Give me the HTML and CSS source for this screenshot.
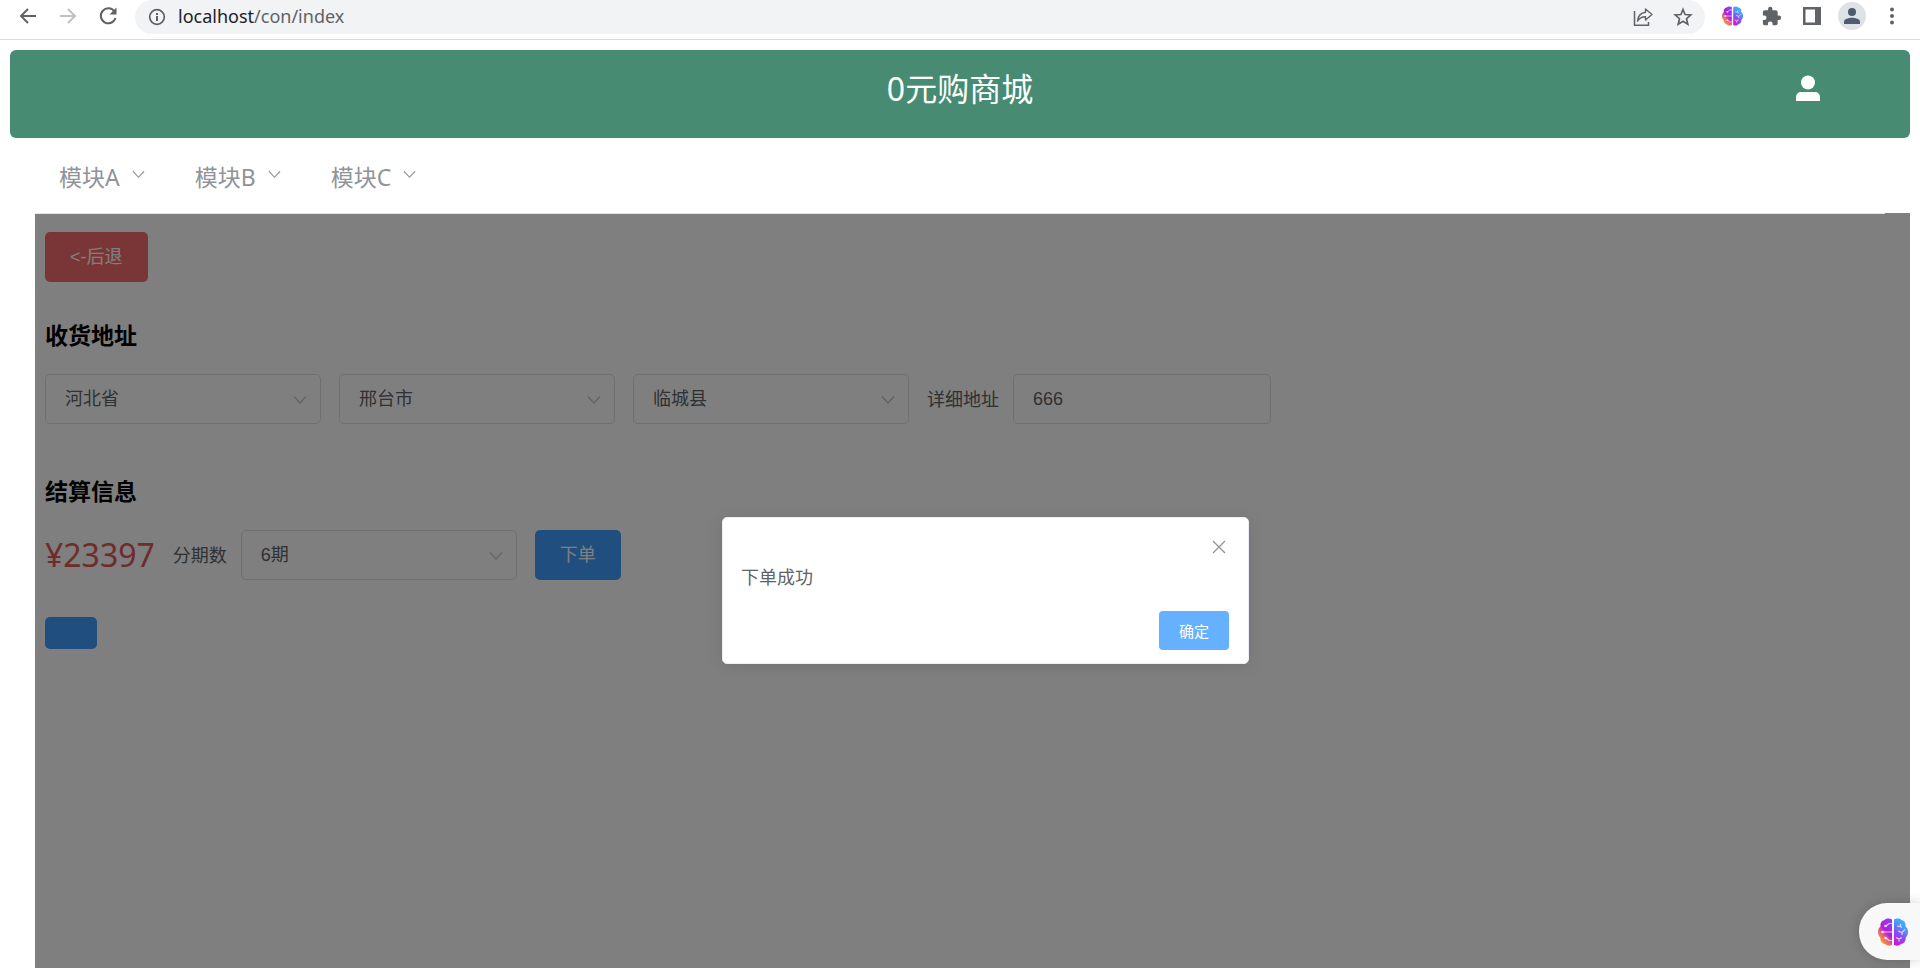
FILE: index.html
```html
<!DOCTYPE html>
<html lang="zh-CN">
<head>
<meta charset="utf-8">
<title>0元购商城</title>
<link rel="stylesheet" href="styles.css">
</head>
<body>
<svg class="defs" width="0" height="0" aria-hidden="true">
  <defs>
    <linearGradient id="brain-left" x1="0" y1="1" x2="0.6" y2="0">
      <stop offset="0.2" stop-color="#ff9a2e"/><stop offset="0.45" stop-color="#e8607c"/><stop offset="0.65" stop-color="#b31be0"/><stop offset="1" stop-color="#8f3cf0"/>
    </linearGradient>
    <linearGradient id="brain-right" x1="0.2" y1="1" x2="0.6" y2="0">
      <stop offset="0" stop-color="#d414d0"/><stop offset="0.4" stop-color="#8a4cf0"/><stop offset="0.8" stop-color="#3fa9ff"/>
    </linearGradient>
    <symbol id="brain" viewBox="0 0 30 28">
      <path fill="url(#brain-left)" d="M14 1.5C12 .2 8.500 0 6.500 2 3.500 2.500 2 5.500 2.500 8.500.5 10 0 12 0 14c0 2.500 1 4.500 2.300 5.500C2 23 4 25.500 7 26c2 2 5 2.200 7 .8z"/>
      <path fill="url(#brain-right)" d="M16 1.500C18 .2 21.500 0 23.500 2c3 .5 4.500 3.500 4 6.500C29.500 10 30 12 30 14c0 2.500-1 4.500-2.300 5.500C28 23 26 25.500 23 26c-2 2-5 2.200-7 .8z"/>
      <path fill="none" stroke="#fff" stroke-opacity=".7" stroke-width="1.200" d="M14 5.500h-3L8 8M4 14h10M14 22.500h-3L8 20M19 8l3 .5M23 6l-1 2.500 2 1M20 13l4 1.500 3-3M24 14.500v2.500M18 19.500l3 1.500 3-1.500M21 21v2.500"/>
      <circle cx="7.500" cy="8" r="1.300" fill="#fff" fill-opacity=".8"/><circle cx="4.500" cy="14" r="1.300" fill="#fff" fill-opacity=".8"/><circle cx="7.500" cy="20" r="1.300" fill="#fff" fill-opacity=".8"/>
    </symbol>
    <symbol id="chevron" viewBox="0 0 14 14"><path d="M1 3.500l6 6.500 6-6.500" fill="none" stroke="currentColor" stroke-width="1.200"/></symbol>
  </defs>
</svg>

<div class="browser-bar">
  <button class="tool" aria-label="返回"><svg width="20" height="20" viewBox="0 0 20 20"><path d="M18 10H3M10 3l-7 7 7 7" fill="none" stroke="#5f6368" stroke-width="2"/></svg></button>
  <button class="tool" aria-label="前进"><svg width="20" height="20" viewBox="0 0 20 20"><path d="M2 10h15M10 3l7 7-7 7" fill="none" stroke="#bfc1c4" stroke-width="2"/></svg></button>
  <button class="tool" aria-label="重新加载"><svg width="20" height="20" viewBox="0 0 20 20"><path d="M16.500 5.500A7.500 7.500 0 1 0 17.500 12" fill="none" stroke="#5f6368" stroke-width="2"/><path d="M18.500 1.500v7h-7z" fill="#5f6368"/></svg></button>
  <div class="omnibox">
    <svg width="18" height="18" viewBox="0 0 18 18"><circle cx="9" cy="9" r="7.300" fill="none" stroke="#5f6368" stroke-width="1.700"/><path d="M8 8h2v5H8zM8 5h2v2H8z" fill="#5f6368"/></svg>
    <span class="url"><span class="host">localhost</span>/con/index</span>
    <button class="mini" aria-label="分享"><svg width="20" height="20" viewBox="0 0 20 20"><path d="M1.500 4v14.300h14V15" fill="none" stroke="#5f6368" stroke-width="1.500"/><path d="M12.500 2l6.500 5.500-6.500 5.500V9.800C9 9.700 6.500 11 4.500 14 5 9.500 7.500 6 12.500 5.300z" fill="none" stroke="#5f6368" stroke-width="1.400" stroke-linejoin="round"/></svg></button>
    <button class="mini" aria-label="收藏"><svg width="20" height="20" viewBox="0 0 20 20"><path d="M10 2.500l2.100 5 5.700.5-4.300 3.700 1.300 5.600-4.800-3-4.800 3 1.300-5.600L2.200 8l5.700-.5z" fill="none" stroke="#5f6368" stroke-width="1.700"/></svg></button>
  </div>
  <button class="tool" aria-label="扩展程序"><svg width="21" height="20"><use href="#brain"/></svg></button>
  <button class="tool" aria-label="扩展"><svg width="20" height="20" viewBox="1 0 23 23"><path fill="#5f6368" d="M20.500 11H19V7a2 2 0 0 0-2-2h-4V3.500a2.500 2.500 0 0 0-5 0V5H4a2 2 0 0 0-2 2v3.800h1.500a2.700 2.700 0 0 1 0 5.400H2V20a2 2 0 0 0 2 2h3.800v-1.500a2.700 2.700 0 0 1 5.400 0V22H17a2 2 0 0 0 2-2v-4h1.500a2.500 2.500 0 0 0 0-5z"/></svg></button>
  <button class="tool" aria-label="侧边栏"><svg width="18" height="18" viewBox="0 0 18 18"><path fill="#5f6368" fill-rule="evenodd" d="M0 0h18v18H0zM2.500 2.500v13H12v-13z"/></svg></button>
  <button class="tool avatar" aria-label="个人资料"><svg width="16" height="16" viewBox="0 0 16 16"><circle cx="8" cy="4" r="4" fill="#4f5b70"/><path d="M0 16v-2.500C0 11 5 9.800 8 9.800s8 1.200 8 3.700V16z" fill="#4f5b70"/></svg></button>
  <button class="tool" aria-label="菜单"><svg width="6" height="18" viewBox="0 0 6 18"><circle cx="3" cy="2.500" r="2" fill="#5f6368"/><circle cx="3" cy="9" r="2" fill="#5f6368"/><circle cx="3" cy="15.500" r="2" fill="#5f6368"/></svg></button>
</div>

<div class="page">
  <header class="banner">
    <h1>0元购商城</h1>
    <button class="user" aria-label="用户"><svg width="24" height="26" viewBox="0 0 24 26"><circle cx="12" cy="7.500" r="7" fill="#fff"/><path d="M0 26v-4a5 5 0 0 1 5-5h14a5 5 0 0 1 5 5v4z" fill="#fff"/></svg></button>
  </header>

  <nav class="menu">
    <button>模块A<svg width="13" height="13"><use href="#chevron"/></svg></button>
    <button>模块B<svg width="13" height="13"><use href="#chevron"/></svg></button>
    <button>模块C<svg width="13" height="13"><use href="#chevron"/></svg></button>
  </nav>

  <main class="content">
    <button class="btn danger">&lt;-后退</button>

    <h2>收货地址</h2>
    <div class="row">
      <span class="select"><select aria-label="省"><option>河北省</option></select><svg width="14" height="14"><use href="#chevron"/></svg></span>
      <span class="select"><select aria-label="市"><option>邢台市</option></select><svg width="14" height="14"><use href="#chevron"/></svg></span>
      <span class="select"><select aria-label="县"><option>临城县</option></select><svg width="14" height="14"><use href="#chevron"/></svg></span>
      <div class="field">
        <label for="detail">详细地址</label>
        <input id="detail" type="text" value="666">
      </div>
    </div>

    <h2>结算信息</h2>
    <div class="row">
      <span class="price">¥23397</span>
      <div class="field">
        <label for="periods">分期数</label>
        <span class="select"><select id="periods"><option>6期</option></select><svg width="14" height="14"><use href="#chevron"/></svg></span>
      </div>
      <button class="btn primary">下单</button>
    </div>
    <button class="btn primary blank" aria-label="更多"></button>

    <div class="overlay">
      <div class="dialog" role="dialog" aria-modal="true" aria-labelledby="dialog-text">
        <button class="close" aria-label="关闭"><svg width="14" height="14" viewBox="0 0 14 14"><path d="M1 1l12 12M13 1L1 13" stroke="#909399" stroke-width="1.300"/></svg></button>
        <p id="dialog-text">下单成功</p>
        <button class="confirm">确定</button>
      </div>
    </div>
  </main>
</div>

<button class="assistant" aria-label="助手"><svg width="30" height="28"><use href="#brain"/></svg></button>
</body>
</html>
```
FILE: styles.css
```css
* {
  box-sizing: border-box;
}

body {
  margin: 0;
  min-height: 100vh;
  display: flex;
  flex-direction: column;
  background: #fff;
  color: #606266;
  font: 18px/24px "Noto Sans", "Noto Sans CJK SC", sans-serif;
}

button,
input,
select {
  margin: 0;
  padding: 0;
  border: 0;
  background: none;
  color: inherit;
  font: inherit;
}

h1,
h2,
p {
  margin: 0;
}

svg {
  display: block;
  flex: none;
}

.defs {
  position: absolute;
}

.browser-bar {
  display: flex;
  align-items: center;
  height: 40px;
  padding: 0 8px 8px;
  border-bottom: 1px solid #dadce0;
}

.tool {
  display: flex;
  align-items: center;
  justify-content: center;
  width: 40px;
  height: 28px;
}

.omnibox {
  flex: 1;
  display: flex;
  align-items: center;
  gap: 12px;
  height: 34px;
  margin: 2px 7px 0;
  padding: 0 8px 0 13px;
  border-radius: 17px;
  background: #f1f3f4;
}

.url {
  flex: 1;
  padding-bottom: 1px;
  color: #5f6368;
}

.host {
  color: #202124;
}

.mini {
  width: 28px;
  display: flex;
  justify-content: center;
}

.avatar {
  width: 28px;
  margin: 0 6px;
  border-radius: 50%;
  background: #dee1e6;
}

.page {
  flex: 1;
  display: flex;
  flex-direction: column;
  padding: 10px 10px 0;
}

.banner {
  display: grid;
  grid-template-columns: 1fr auto 1fr;
  align-items: start;
  height: 88px;
  padding: 15px 90px 0;
  border-radius: 6px;
  background: #468b72;
  color: #fff;
}

.banner h1 {
  grid-column: 2;
  font-size: 32px;
  line-height: 48px;
  font-weight: 400;
}

.user {
  justify-self: end;
  margin-top: 10px;
}

.menu {
  position: relative;
  z-index: 1;
  display: flex;
  gap: 50px;
  height: 76px;
  margin: 0 25px;
  padding: 2px 24px 0;
  border-bottom: 1px solid #e6e6e6;
}

.menu button {
  display: flex;
  align-items: center;
  gap: 12px;
  color: #909399;
  font-size: 23px;
}

.menu svg {
  margin-bottom: 4px;
}

.content {
  position: relative;
  flex: 1;
  display: flex;
  flex-direction: column;
  align-items: flex-start;
  margin: -1px 0 0 25px;
  padding: 19px 10px;
}

.content h2 {
  margin: 35px 0 21px;
  color: #000;
  font-size: 23px;
  line-height: 36px;
  font-weight: 700;
}

.row {
  display: flex;
  align-items: center;
  gap: 18px;
}

.row + h2 {
  margin-top: 49px;
}

.field {
  display: flex;
  align-items: center;
  gap: 14px;
}

.field label {
  padding-bottom: 1px;
}

.select {
  position: relative;
  display: block;
}

.select svg {
  position: absolute;
  right: 14px;
  top: 19px;
  color: #c0c4cc;
  pointer-events: none;
}

.select select,
.field input {
  width: 276px;
  height: 50px;
  padding: 0 19px;
  border: 1px solid #dcdfe6;
  border-radius: 5px;
  background: #fff;
  font-family: "Liberation Sans", "Noto Sans CJK SC", sans-serif;
  appearance: none;
}

.field input {
  width: 258px;
}

.price {
  color: #dc5858;
  font-size: 32px;
}

.btn {
  height: 50px;
  padding: 0 25px;
  border-radius: 5px;
  color: #fff;
  font-family: "Liberation Sans", "Noto Sans CJK SC", sans-serif;
}

.danger {
  background: #f56c6c;
}

.primary {
  background: #409eff;
}

.blank {
  width: 52px;
  height: 32px;
  margin-top: 37px;
}

.overlay {
  position: absolute;
  inset: 0;
  display: flex;
  align-items: center;
  justify-content: center;
  padding-left: 26px;
  background: rgba(0, 0, 0, 0.5);
}

.dialog {
  display: flex;
  flex-direction: column;
  width: 527px;
  padding: 22px 18px 13px;
  border: 1px solid #ebeef5;
  border-radius: 5px;
  background: #fff;
  box-shadow: 0 2px 15px rgba(0, 0, 0, 0.1);
}

.close {
  align-self: flex-end;
  margin-right: 4px;
}

.dialog p {
  margin: 11px 0 22px;
}

.confirm {
  align-self: flex-end;
  width: 70px;
  height: 39px;
  margin-right: 1px;
  border-radius: 4px;
  background: #66b1ff;
  color: #fff;
  font-size: 15px;
  font-weight: 400;
}

.assistant {
  position: fixed;
  right: 0;
  bottom: 8px;
  z-index: 2;
  width: 61px;
  height: 57px;
  padding-left: 19px;
  border-radius: 28px 0 0 28px;
  background: #f8f8f8;
  box-shadow: 0 0 12px rgba(0, 0, 0, 0.2);
}
```
